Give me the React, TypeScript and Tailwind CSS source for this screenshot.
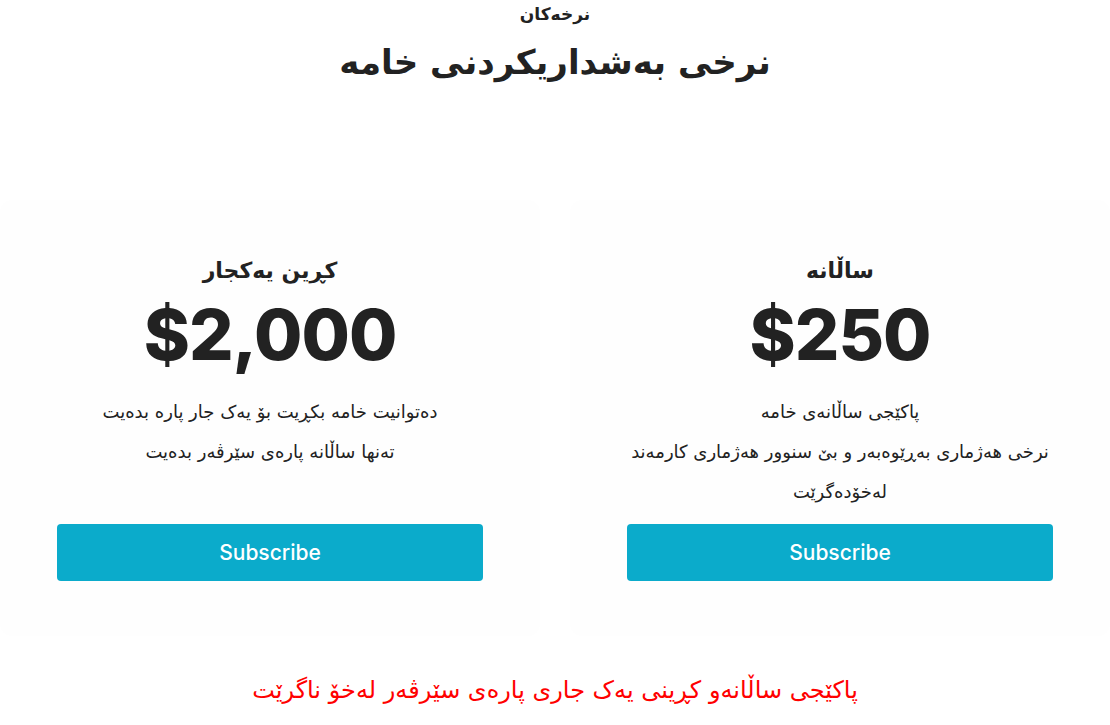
const ar = "font-['DejaVu_Sans','Noto_Sans',sans-serif]";

type Plan = { title: string; price: string; lines: string[] };

const plans: Plan[] = [
  {
    title: "ساڵانە",
    price: "$250",
    lines: ["پاکێجی ساڵانەی خامە", "نرخی هەژماری بەڕێوەبەر و بێ سنوور هەژماری کارمەند", "لەخۆدەگرێت"],
  },
  {
    title: "کڕین یەکجار",
    price: "$2,000",
    lines: ["دەتوانیت خامە بکڕیت بۆ یەک جار پارە بدەیت", "تەنها ساڵانە پارەی سێرڤەر بدەیت"],
  },
];

function PlanCard({ plan }: { plan: Plan }) {
  return (
    <div className="flex h-[436px] flex-col items-center rounded-xl bg-[#fefefe] px-[57px] pb-[55px] pt-[56px] text-center text-[#222]">
      <h3 className={`${ar} text-[22px] font-bold leading-[30px]`}>{plan.title}</h3>
      <div dir="ltr" className="mt-[9px] font-['Inter',sans-serif] text-[70px] font-extrabold leading-[80px] tracking-[-1px]">
        {plan.price}
      </div>
      <div className={`${ar} mt-[17px] text-[18px] leading-[40px]`}>
        {plan.lines.map((l) => (
          <p key={l}>{l}</p>
        ))}
      </div>
      <button className="mt-auto h-[57px] w-full shrink-0 rounded-[4px] bg-[#0babcb] font-['Inter',sans-serif] text-[21px] font-medium text-white">
        Subscribe
      </button>
    </div>
  );
}

export default function App() {
  return (
    <div dir="rtl" className="min-h-[725px] w-[1110px] bg-white">
      <div className="text-center text-[#222]">
        <p className={`${ar} text-[17px] font-bold leading-[28px]`}>نرخەکان</p>
        <h2 className={`${ar} mt-[10px] text-[34px] font-bold leading-[48px]`}>نرخی بەشداریکردنی خامە</h2>
      </div>
      <div className="mt-[114px] grid grid-cols-2 gap-[30px]">
        {plans.map((p) => (
          <PlanCard key={p.price} plan={p} />
        ))}
      </div>
      <p className={`${ar} mt-[36px] text-center text-[24px] leading-[36px] text-[#ff0000]`}>
        پاکێجی ساڵانەو کڕینی یەک جاری پارەی سێرڤەر لەخۆ ناگرێت
      </p>
    </div>
  );
}
